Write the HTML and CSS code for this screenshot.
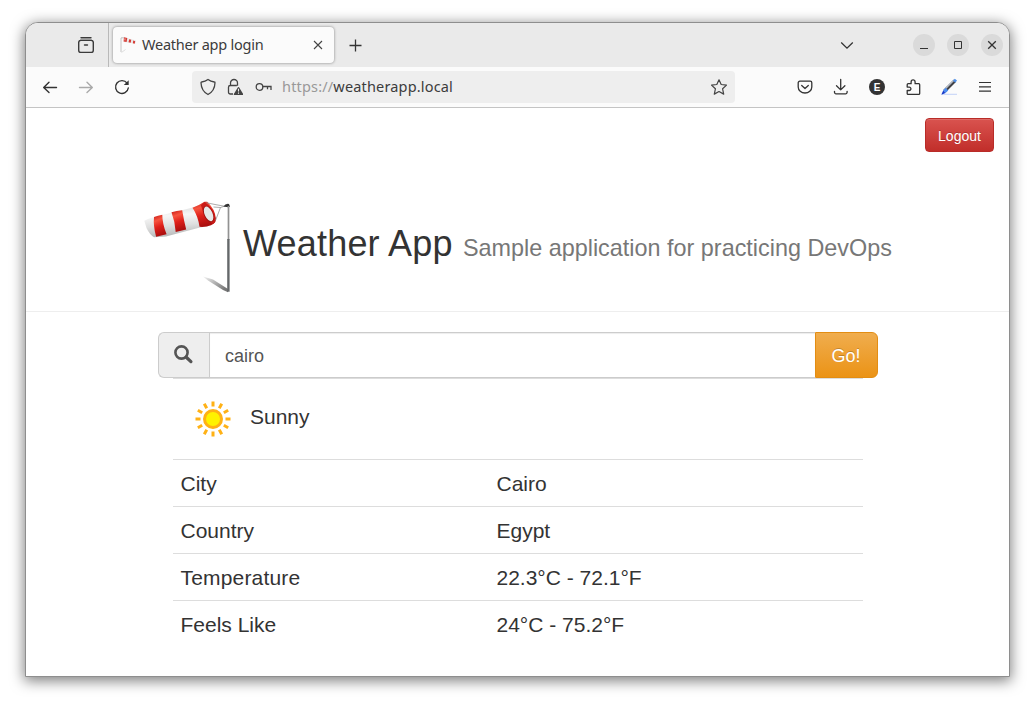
FILE: index.html
```html
<!DOCTYPE html>
<html lang="en">
<head>
<meta charset="utf-8">
<title>Weather app login</title>
<link rel="stylesheet" href="styles.css">
</head>
<body>
<div class="window">
  <div class="tabbar">
    <div class="tabview">
      <svg width="18" height="18" viewBox="0 0 18 18" fill="none" stroke="#3b3b3b" stroke-width="1.4" stroke-linecap="round"><path d="M4 1.700h10"/><rect x="1.700" y="4.400" width="14.600" height="12" rx="2.200"/><path d="M3.200 4.400h11.600M7.500 9h3"/></svg>
    </div>
    <div class="tab">
      <svg class="favicon" width="16" height="16" viewBox="0 0 16 16"><path d="M1 1v14" stroke="#c4c4c4"/><path d="M1.500 15.500l4-3" stroke="#ddd"/><path d="M1 .8h3" stroke="#999" stroke-width=".6"/><path d="M4 .2l12 3.300-.6 3L3.500 5z" fill="#e9e9e9"/><path d="M4 .2l3.300.8-.7 4.100-3-.7zM9.200 2.200l2 .6-.5 3-2.200-.5zM13.300 3.600l1.900.6-.5 2.500-1.900-.4z" fill="#d63a34"/><path d="M4.600 1.300l1 .3-.3 2-.9-.3z" fill="#f0b8b4"/></svg>
      <span class="tab-title">Weather app login</span>
      <svg class="tab-close" width="10" height="10" viewBox="0 0 10 10" stroke="#444" stroke-width="1.100"><path d="M1 1l8 8M9 1L1 9"/></svg>
    </div>
    <svg class="newtab" width="13" height="13" viewBox="0 0 13 13" stroke="#333" stroke-width="1.300"><path d="M6.500 .5v12M.5 6.500h12"/></svg>
    <svg class="chevron" width="14" height="9" viewBox="0 0 14 9" fill="none" stroke="#333" stroke-width="1.300"><path d="M1.200 1.500L7 7.200l5.800-5.700"/></svg>
    <div class="controls">
      <span class="control"><svg width="22" height="22" stroke="#333" stroke-width="1"><path d="M7 14.500h8"/></svg></span>
      <span class="control"><svg width="22" height="22" fill="none" stroke="#333" stroke-width="1"><path d="M7.500 7.500h7v7h-7z"/></svg></span>
      <span class="control"><svg width="22" height="22" stroke="#333" stroke-width="1.300"><path d="M7.200 7.200l7.600 7.600M14.800 7.200l-7.600 7.600"/></svg></span>
    </div>
  </div>
  <div class="toolbar">
    <div class="nav">
      <svg width="16" height="16" viewBox="0 0 16 16" fill="none" stroke="#333" stroke-width="1.400" stroke-linecap="round" stroke-linejoin="round"><path d="M14.500 8.500H1.800M7 3.200L1.700 8.500 7 13.600"/></svg>
      <svg width="16" height="16" viewBox="0 0 16 16" fill="none" stroke="#aaa" stroke-width="1.400" stroke-linecap="round" stroke-linejoin="round"><path d="M1.500 8.500h12.700M9 3.200l5.300 5.300L9 13.600"/></svg>
      <svg width="16" height="16" viewBox="0 0 16 16" fill="none" stroke="#333" stroke-width="1.400" stroke-linecap="round"><path d="M13.100 4.200A6.400 6.400 0 1 0 14.300 9"/><path d="M14.700 1.200v4.800H9.800z" fill="#333" stroke="none"/></svg>
    </div>
    <div class="urlbar">
      <svg width="16" height="18" viewBox="0 0 16 18" fill="none" stroke="#444" stroke-width="1.300" stroke-linejoin="round"><path d="M8 1.500C6 3 3.800 3.700 1.600 4c-.5 0-.6.4-.6.8C1.200 10.500 3 14 8 16.500 13 14 14.800 10.500 15 4.800c0-.4-.1-.8-.6-.8C12.200 3.700 10 3 8 1.500z"/></svg>
      <svg width="16" height="18" viewBox="0 0 16 18" fill="none" stroke="#444" stroke-width="1.300"><path d="M6 16H3.300a1.800 1.800 0 0 1-1.800-1.800V9.300a1.800 1.800 0 0 1 1.800-1.800h6.500M3.500 7.500V5a3.500 3.500 0 0 1 7 0v2.800"/><path d="M11.500 9.700L15.600 16.400H7.400z" fill="#444" stroke-linejoin="round"/><path d="M11.500 10.800v2.800M11.500 14.500v1.200" stroke="#eee" stroke-width="1.100"/></svg>
      <svg width="18" height="18" viewBox="0 0 18 18" fill="none" stroke="#444" stroke-width="1.300"><circle cx="5.500" cy="9" r="3.300"/><path d="M8.800 8.500h8.200v3.500M13.500 8.500v2.700"/></svg>
      <span class="url"><span class="scheme">https://</span>weatherapp.local</span>
      <svg class="star" width="18" height="18" viewBox="0 0 18 18" fill="none" stroke="#444" stroke-width="1.200" stroke-linejoin="round"><path d="M9 1.800l2.200 4.700 5.300.6-3.900 3.700 1.100 5.300L9 13.500l-4.700 2.600 1.100-5.300L1.500 7.100l5.300-.6z"/></svg>
    </div>
    <div class="tools">
      <svg width="18" height="18" viewBox="0 0 18 18" fill="none" stroke="#333" stroke-width="1.300" stroke-linecap="round" stroke-linejoin="round"><path d="M3.800 3.200h10.400a1.600 1.600 0 0 1 1.600 1.600v4.100a6.800 6.100 0 0 1-13.600 0V4.800a1.600 1.600 0 0 1 1.600-1.600zM5.700 7.500L9 10.500l3.300-3"/></svg>
      <svg width="18" height="18" viewBox="0 0 18 18" fill="none" stroke="#333" stroke-width="1.300" stroke-linecap="round" stroke-linejoin="round"><path d="M8.700 1.500v10.300M4.500 7.800l4.200 4.100 4.200-4.100M2.500 13.300v1a1.500 1.500 0 0 0 1.500 1.500h9.600a1.500 1.500 0 0 0 1.500-1.500v-1"/></svg>
      <span class="account">E</span>
      <svg width="18" height="18" viewBox="0 0 18 18" fill="none" stroke="#333" stroke-width="1.300" stroke-linejoin="round"><path d="M4.400 16.400h10.300a1 1 0 0 0 1-1V6.700a1 1 0 0 0-1-1h-3.600V3.900a2 2 0 1 0-4 0v1.800H4.200a1 1 0 0 0-1 1v2.400h2a1.700 1.700 0 1 1 0 3.400h-2v2.900a1 1 0 0 0 1.200 1z"/></svg>
      <svg width="18" height="18" viewBox="0 0 18 18"><path d="M2 16.300h15" stroke="#c3d2f8" stroke-width="1"/><path d="M4.600 13L14.800 2.800" stroke="#414145" stroke-width="3.200"/><path d="M3.800 12.200L14 2" stroke="#b3b9c3" stroke-width="1.600"/><path d="M3 12.600l2.700-2.800 2.500 2.600L5.500 15z" fill="#4b8cf0"/><path d="M1.300 16.700l1.900-4.200 2.300 2.500z" fill="#1739c9"/><path d="M13 2.500l1.800-1.800 2.200 1.800-1.700 2.200z" fill="#4e8fe8"/></svg>
      <svg width="18" height="18" viewBox="0 0 18 18" stroke="#333" stroke-width="1.200"><path d="M3 4.500h12M3 8.800h12M3 13.200h12"/></svg>
    </div>
  </div>
  <main class="page">
    <a class="logout">Logout</a>
    <header class="page-header">
      <svg class="windsock" width="90" height="96" viewBox="0 0 90 96">
        <defs>
          <linearGradient id="w" x1="0" y1="0" x2=".15" y2="1"><stop offset="0" stop-color="#cfd0d0"/><stop offset=".4" stop-color="#f6f6f6"/><stop offset=".7" stop-color="#dedfdf"/><stop offset="1" stop-color="#b9bbbb"/></linearGradient>
          <linearGradient id="r" x1="0" y1="0" x2=".25" y2="1"><stop offset="0" stop-color="#c61a16"/><stop offset=".3" stop-color="#f7543f"/><stop offset=".6" stop-color="#df201a"/><stop offset="1" stop-color="#ad0f0f"/></linearGradient>
          <linearGradient id="s" x1="0" y1="0" x2="1" y2=".6"><stop offset="0" stop-color="#f4f4f4"/><stop offset="1" stop-color="#777"/></linearGradient>
        </defs>
        <path d="M58 77.500l10 3 15 9.500v3.200l-5-2.200-15-9.500z" fill="url(#s)"/>
        <path d="M-.7 21.800Q3 19.500 9 18L48 8.500 57 5 64 27 55 28.500 21 37.500 9 38.200Q4.500 35.500 1.500 29z" fill="url(#w)"/>
        <path d="M9 18q4-1.500 8.300-2.200 0 9 4.300 19.500l-10.500 2.500q-3-11-2.100-19.800z" fill="url(#r)"/>
        <path d="M26.500 13.300q5-1.700 10.700-2 1.500 9.500 4 19.300l-10.500 2.500q-.5-9.700-4.200-19.800z" fill="url(#r)"/>
        <path d="M47.500 8.700Q54 6.500 59.500 2.800l2.700 0Q70 10 70.800 19.500 71 24 66 26.300 61 28.300 54.500 27.800 53 17 47.500 8.700z" fill="url(#r)"/>
        <path d="M59.500 2.900Q68 8 70.700 19.500 71 23.500 68 25 58 18 56 6z" fill="#c91b17"/>
        <ellipse cx="63.500" cy="15" rx="4.700" ry="8.600" transform="rotate(-24 63.500 15)" fill="#9f1411"/>
        <ellipse cx="63.600" cy="14.900" rx="3.900" ry="7.800" transform="rotate(-24 63.600 14.900)" fill="#e6e7e7"/>
        <path d="M61.500 3.800L71 5.700 81 7.500M75.500 8.500L68.500 8M75.500 8.500L70.500 21.500M75.500 8.500L80 7" fill="none" stroke="#888" stroke-width=".7"/>
        <path d="M78.500 7.500q2-3.200 5.500-2.500l1 2.800-2 .5z" fill="#333"/>
        <path d="M83.500 7v34" stroke="#929292" stroke-width="1.700"/><path d="M83.400 40v52.700" stroke="#65686a" stroke-width="2.400"/>
      </svg>
      <h1 class="title">Weather App <small class="subtitle">Sample application for practicing DevOps</small></h1>
    </header>
    <div class="search">
      <span class="search-icon"><svg width="20" height="20" viewBox="0 0 20 20" fill="none" stroke="#555"><circle cx="7.500" cy="7.500" r="6.100" stroke-width="2.600"/><path d="M12.300 12.200l4.600 4.400" stroke-width="3.300" stroke-linecap="round"/></svg></span>
      <span class="search-input">cairo</span>
      <span class="go">Go!</span>
    </div>
    <section class="report">
      <div class="condition">
        <svg width="38" height="38" viewBox="-19 -19 38 38" stroke="#ffb115" stroke-width="3">
          <path d="M0-17.500v5M0 12.500v5M-17.500 0h5M12.500 0h5"/>
          <path d="M0-17.500v5M0 12.500v5M-17.500 0h5M12.500 0h5" transform="rotate(30)"/>
          <path d="M0-17.500v5M0 12.500v5M-17.500 0h5M12.500 0h5" transform="rotate(60)"/>
          <circle r="8.500" fill="#fff200"/>
        </svg>
        <span>Sunny</span>
      </div>
      <div class="row"><span class="label">City</span><span>Cairo</span></div>
      <div class="row"><span class="label">Country</span><span>Egypt</span></div>
      <div class="row"><span class="label wide">Temperature</span><span>22.3°C - 72.1°F</span></div>
      <div class="row"><span class="label">Feels Like</span><span>24°C - 75.2°F</span></div>
    </section>
  </main>
</div>
</body>
</html>
```
FILE: styles.css
```css
* { box-sizing: border-box; }
body {
  margin: 0;
  height: 705px;
  padding: 22px 25px 28px;
  background: #fff;
  overflow: hidden;
  font-family: "Liberation Sans", Arial, sans-serif;
  color: #333;
}
svg { display: block; flex: none; }
.window {
  width: 985px;
  height: 655px;
  border: 1px solid #8e8e8e;
  border-radius: 13px 13px 0 0;
  background: #fff;
  box-shadow: 0 3px 14px 1px rgba(0, 0, 0, .5);
  overflow: hidden;
}
.tabbar {
  display: flex;
  align-items: center;
  height: 44px;
  background: #eaeaea;
}
.tabview {
  width: 83px;
  height: 44px;
  padding: 13px 0 0 51px;
  border-right: 1px solid #b9b9b9;
}
.tab {
  display: flex;
  align-items: center;
  width: 221px;
  height: 36px;
  margin-left: 4px;
  padding: 0 11px 0 7px;
  border-radius: 4px;
  background: #fbfbfb;
  box-shadow: 0 0 3px rgba(0, 0, 0, .45);
}
.tab-title {
  margin: -2px 0 0 6px;
  color: #3c3c3c;
  font: 14.5px "Noto Sans", sans-serif;
  letter-spacing: -.24px;
  white-space: nowrap;
}
.tab-close { margin-left: auto; }
.newtab { margin-left: 15px; }
.chevron { margin-left: auto; margin-right: 59px; }
.controls { display: flex; gap: 12px; margin-right: 6px; }
.control {
  width: 22px;
  height: 22px;
  border-radius: 50%;
  background: #dadada;
}
.toolbar {
  display: flex;
  align-items: center;
  height: 41px;
  padding: 0 15px 0 16px;
  border-bottom: 1px solid #c4c4c4;
  background: #fbfbfb;
}
.nav { display: flex; gap: 20px; }
.urlbar {
  display: flex;
  align-items: center;
  width: 543px;
  height: 32px;
  margin-left: 62px;
  padding: 0 7px 0 8px;
  border-radius: 4px;
  background: #eee;
  gap: 11px;
}
.url {
  margin: -2px 0 0 -1px;
  color: #3c3c3c;
  font: 14.5px "Noto Sans", sans-serif;
  letter-spacing: .17px;
  white-space: nowrap;
}
.scheme { color: #999; }
.star { margin-left: auto; }
.tools {
  display: flex;
  align-items: center;
  gap: 18px;
  margin-left: auto;
}
.account {
  width: 16px;
  height: 16px;
  margin: 0 1px;
  border-radius: 50%;
  background: #333;
  color: #fff;
  font: bold 10px/17px "Liberation Sans", sans-serif;
  text-align: center;
}
.page { display: flex; flex-direction: column; height: 568px; padding-top: 10px; }
.logout {
  align-self: flex-end;
  width: 69px;
  height: 34px;
  margin-right: 15px;
  border: 1px solid #b92c28;
  border-radius: 4px;
  background: linear-gradient(#d9534f, #c12e2a);
  box-shadow: inset 0 1px 0 rgba(255, 255, 255, .15);
  color: #fff;
  font-size: 14px;
  line-height: 34px;
  text-align: center;
  text-shadow: 0 -1px 0 rgba(0, 0, 0, .2);
}
.page-header {
  display: flex;
  height: 160px;
  padding: 47px 0 0 119px;
  border-bottom: 1px solid #eee;
}
.windsock { overflow: visible; }
.title {
  margin: 25px 0 0 8px;
  font-size: 36px;
  font-weight: normal;
  letter-spacing: .2px;
  line-height: 40px;
  white-space: nowrap;
}
.subtitle {
  color: #777;
  font-size: 23.4px;
  letter-spacing: 0;
}
.search {
  display: flex;
  width: 720px;
  height: 46px;
  margin: 20px 0 0 132px;
  font-size: 18px;
  line-height: 46px;
}
.search-icon {
  width: 51px;
  padding: 12px 0 0 15px;
  border: 1px solid #ccc;
  border-right: 0;
  border-radius: 6px 0 0 6px;
  background: #eee;
}
.search-input {
  flex: 1;
  padding-left: 15px;
  border: 1px solid #ccc;
  border-right: 0;
  box-shadow: inset 0 1px 1px rgba(0, 0, 0, .075);
  color: #555;
}
.go {
  width: 63px;
  padding-right: 1px;
  border: 1px solid #e38d13;
  border-radius: 0 6px 6px 0;
  background: linear-gradient(#f0ad4e, #eb9316);
  color: #fff;
  text-align: center;
  text-shadow: 0 -1px 0 rgba(0, 0, 0, .2);
}
.report {
  width: 690px;
  margin-left: 147px;
  border-top: 1px solid #ddd;
  font-size: 21px;
}
.condition {
  display: flex;
  height: 80px;
  padding: 21px 0 0 21px;
  gap: 18px;
  line-height: 34px;
}
.row {
  display: flex;
  height: 47px;
  padding-left: 7.5px;
  border-top: 1px solid #ddd;
  line-height: 47px;
}
.label { width: 316px; }
.wide { letter-spacing: .18px; }
```
